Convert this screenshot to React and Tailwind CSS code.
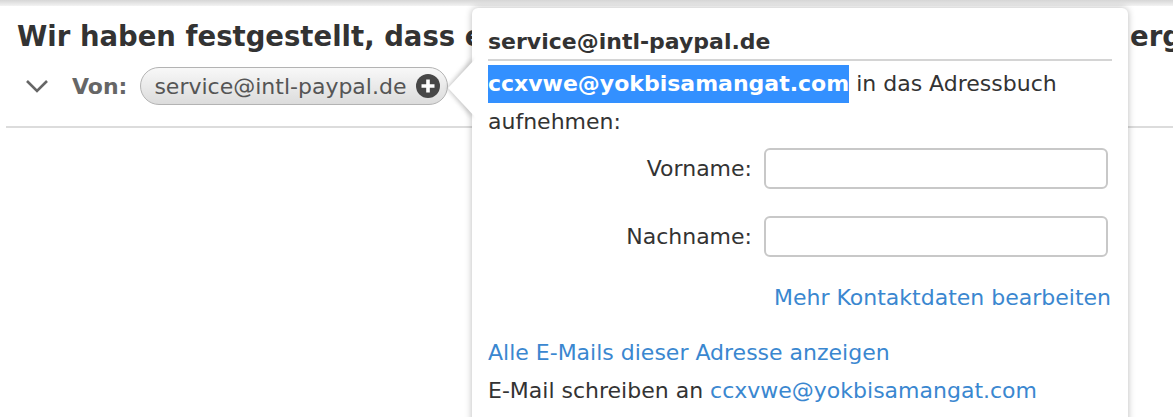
function Chevron() {
  return (
    <svg width="24" height="14" viewBox="0 0 24 14" className="shrink-0">
      <polyline points="2,2 12,12 22,2" fill="none" stroke="#666" strokeWidth="2.6" />
    </svg>
  );
}

function PlusCircle() {
  return (
    <svg width="24" height="24" viewBox="0 0 24 24" className="shrink-0">
      <circle cx="12" cy="12" r="12" fill="#474747" />
      <path d="M12 5.5v13M5.5 12h13" stroke="#fff" strokeWidth="3.6" />
    </svg>
  );
}

function Arrow() {
  return (
    <svg width="34" height="70" viewBox="0 0 34 70" className="absolute left-[-30px] top-[45px]">
      <defs>
        <filter id="arrowShadow" x="-50%" y="-50%" width="200%" height="200%">
          <feGaussianBlur stdDeviation="2" />
        </filter>
      </defs>
      <polygon points="30,5 5,35 30,65" fill="#9a9a9a" opacity="0.55" filter="url(#arrowShadow)" />
      <polygon points="34,5 6,35 34,65" fill="#fff" />
    </svg>
  );
}

function Popover() {
  return (
    <div className="absolute left-[472px] top-[8px] w-[656px] h-[440px] rounded-[6px] bg-white shadow-[0_0_7px_rgba(0,0,0,0.28)] px-4 pt-[20px] text-[22px] text-[#333]">
      <Arrow />
      <div className="relative font-bold leading-[28px] pb-[3px] border-b-2 border-[#d4d4d4]">
        service@intl-paypal.de
      </div>
      <div className="relative mt-[4px] leading-[38px]">
        <span className="inline-block h-[38px] font-bold text-white bg-[#3390ff]">ccxvwe@yokbisamangat.com</span>
        {' '}in das Adressbuch aufnehmen:
      </div>
      <div className="relative mt-[7px] grid grid-cols-[264px_344px] gap-x-3 gap-y-[27px] items-center">
        <label className="text-right">Vorname:</label>
        <input className="h-[41px] rounded-[6px] border-2 border-[#c8c8c8] bg-white outline-none" />
        <label className="text-right">Nachname:</label>
        <input className="h-[41px] rounded-[6px] border-2 border-[#c8c8c8] bg-white outline-none" />
      </div>
      <div className="relative mt-[22px] leading-[38px] text-right pr-px text-[#3a87d0]">
        Mehr Kontaktdaten bearbeiten
      </div>
      <div className="relative mt-[17px] leading-[38px] text-[#3a87d0]">
        Alle E-Mails dieser Adresse anzeigen
      </div>
      <div className="relative leading-[38px]">
        E-Mail schreiben an <span className="text-[#3a87d0]">ccxvwe@yokbisamangat.com</span>
      </div>
    </div>
  );
}

export default function App() {
  return (
    <div className="relative w-[1173px] h-[417px] overflow-hidden bg-white font-['DejaVu_Sans',Verdana,sans-serif]">
      <div className="h-[6px] bg-gradient-to-b from-[#d6d6d6] to-[#f3f3f3]" />

      <h1 className="mt-[14px] pl-[17px] flex whitespace-nowrap text-[27.5px] leading-[32px] font-bold text-[#333]">
        <span className="w-[1113px] shrink-0 overflow-hidden">
          Wir haben festgestellt, dass ein ungewöhnlicher Zugriff auf Ihr Konto
        </span>
        <span className="shrink-0">ergriffen</span>
      </h1>

      <div className="mt-[15px] pl-[25px] flex items-center h-[38px]">
        <Chevron />
        <span className="ml-[23px] text-[22px] font-bold text-[#666]">Von:</span>
        <div className="ml-[13px] h-[38px] flex items-center gap-[10px] pl-[13px] pr-[7px] rounded-full border border-[#b3b3b3] bg-gradient-to-b from-[#f8f8f8] to-[#dcdcdc] text-[22px] text-[#555]">
          <span>service@intl-paypal.de</span>
          <PlusCircle />
        </div>
      </div>

      <div className="mt-[21px] ml-[6px] border-t-2 border-[#dcdcdc]" />

      <Popover />
    </div>
  );
}
